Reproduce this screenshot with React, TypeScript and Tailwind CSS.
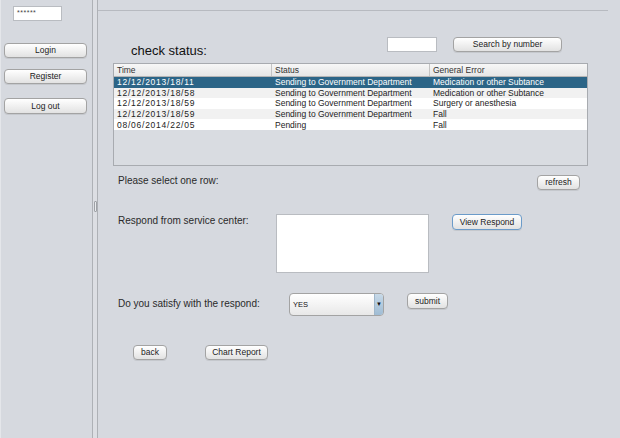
import React from "react";

const font = { fontFamily: '"Liberation Sans", Arial, sans-serif' };

function Btn({ label, w, h = 15, blue = false }: { label: string; w: number; h?: number; blue?: boolean }) {
  return (
    <div
      className={`flex items-center justify-center rounded-[4px] border bg-gradient-to-b from-[#ffffff] to-[#e2e2e2] text-[8.5px] text-[#222] shadow-[0_1px_0_rgba(0,0,0,0.08)] ${blue ? "border-[#6b9bc9] shadow-[0_0_0_1px_rgba(120,160,210,0.35)]" : "border-[#a3a3a3]"}`}
      style={{ width: w, height: h }}
    >
      {label}
    </div>
  );
}

const rows = [
  ["12/12/2013/18/11", "Sending to Government Department", "Medication or other Subtance"],
  ["12/12/2013/18/58", "Sending to Government Department", "Medication or other Subtance"],
  ["12/12/2013/18/59", "Sending to Government Department", "Surgery or anesthesia"],
  ["12/12/2013/18/59", "Sending to Government Department", "Fall"],
  ["08/06/2014/22/05", "Pending", "Fall"],
];

export default function App() {
  return (
    <div className="flex h-[438px] w-[620px] overflow-hidden bg-[#d6d9df]" style={font}>
      {/* left panel */}
      <div className="flex w-[92px] flex-col border-l border-[#e4e6ea] pl-[3px]">
        <div className="ml-[9px] mt-[6px] flex h-[15px] w-[49px] items-center border border-[#b9bcc1] bg-white pl-[3px] text-[7px] tracking-[0.5px] text-[#444]">
          ******
        </div>
        <div className="mt-[22px]"><Btn label="Login" w={83} /></div>
        <div className="mt-[11px]"><Btn label="Register" w={83} /></div>
        <div className="mt-[14px]"><Btn label="Log out" w={83} h={16} /></div>
      </div>

      {/* divider */}
      <div className="flex w-[6px] items-start justify-center border-x border-[#aeb1b6] bg-[#dcdee3]">
        <div className="mt-[201px] h-[11px] w-[3px] rounded-[1px] border border-[#9ea1a6] bg-[#e9ebee]" />
      </div>

      {/* right panel */}
      <div className="flex flex-1 flex-col pt-[10px]">
        <div className="mr-[12px] h-[2px] border-t border-[#b7bac0] border-b-[#e4e6ea]" />

        <div className="mt-[25px] flex h-[15px] items-end">
          <div className="ml-[33px] w-[256px] translate-y-[5px] text-[13px] leading-[13px] text-[#111]">check status:</div>
          <div className="h-[15px] w-[50px] border border-[#b9bcc1] bg-white" />
          <div className="ml-[16px]"><Btn label="Search by number" w={109} /></div>
        </div>

        {/* table */}
        <div className="ml-[15px] mt-[11px] flex h-[103px] w-[475px] flex-col border border-[#a8abb0] bg-[#d9dce1]">
          <div className="flex h-[13px] border-b border-[#b5b5b5] bg-gradient-to-b from-[#f7f7f7] to-[#e6e6e6] text-[8.5px] leading-[13px] text-[#333]">
            <div className="w-[158px] border-r border-[#c4c4c4] pl-[3px]">Time</div>
            <div className="w-[158px] border-r border-[#c4c4c4] pl-[3px]">Status</div>
            <div className="flex-1 pl-[3px]">General Error</div>
          </div>
          {rows.map((r, i) => (
            <div
              key={i}
              className={`flex h-[10.6px] items-center text-[8.5px] leading-[10px] ${i === 0 ? "bg-[#2c6587] text-white" : i % 2 === 1 ? "bg-[#f1f1f1] text-[#222]" : "bg-white text-[#222]"}`}
            >
              <div className="w-[158px] pl-[3px] tracking-[0.75px]">{r[0]}</div>
              <div className="w-[158px] pl-[3px]">{r[1]}</div>
              <div className="flex-1 pl-[3px]">{r[2]}</div>
            </div>
          ))}
        </div>

        <div className="mt-[9px] flex h-[15px] items-center">
          <div className="ml-[20px] w-[419px] -translate-y-[2px] text-[10px] text-[#2a2a2a]">Please select one row:</div>
          <Btn label="refresh" w={43} />
        </div>

        <div className="mt-[24px] flex items-start">
          <div className="ml-[20px] -mt-[1px] w-[158px] text-[10px] text-[#2a2a2a]">Respond from service center:</div>
          <div className="h-[59px] w-[153px] border border-[#b9bcc1] bg-white" />
          <div className="ml-[23px]"><Btn label="View Respond" w={70} h={16} blue /></div>
        </div>

        <div className="mt-[20px] flex items-start">
          <div className="ml-[20px] mt-[3px] w-[171px] text-[10px] text-[#2a2a2a]">Do you satisfy with the respond:</div>
          <div className="flex h-[23px] w-[95px] overflow-hidden rounded-[4px] border border-[#a3a3a3] bg-gradient-to-b from-[#ffffff] to-[#e8e8e8]">
            <div className="flex flex-1 items-center pl-[3px] text-[7.5px] text-[#111]">YES</div>
            <div className="flex w-[9px] items-center justify-center border-l border-[#9fb6ca] bg-gradient-to-b from-[#c7d9e8] to-[#9fbcd4] text-[6px] text-[#111]">▼</div>
          </div>
          <div className="ml-[23px]"><Btn label="submit" w={41} h={16} /></div>
        </div>

        <div className="mt-[29px] flex items-center">
          <div className="ml-[35px]"><Btn label="back" w={34} h={15} /></div>
          <div className="ml-[38px]"><Btn label="Chart Report" w={63} h={15} /></div>
        </div>
      </div>
    </div>
  );
}
